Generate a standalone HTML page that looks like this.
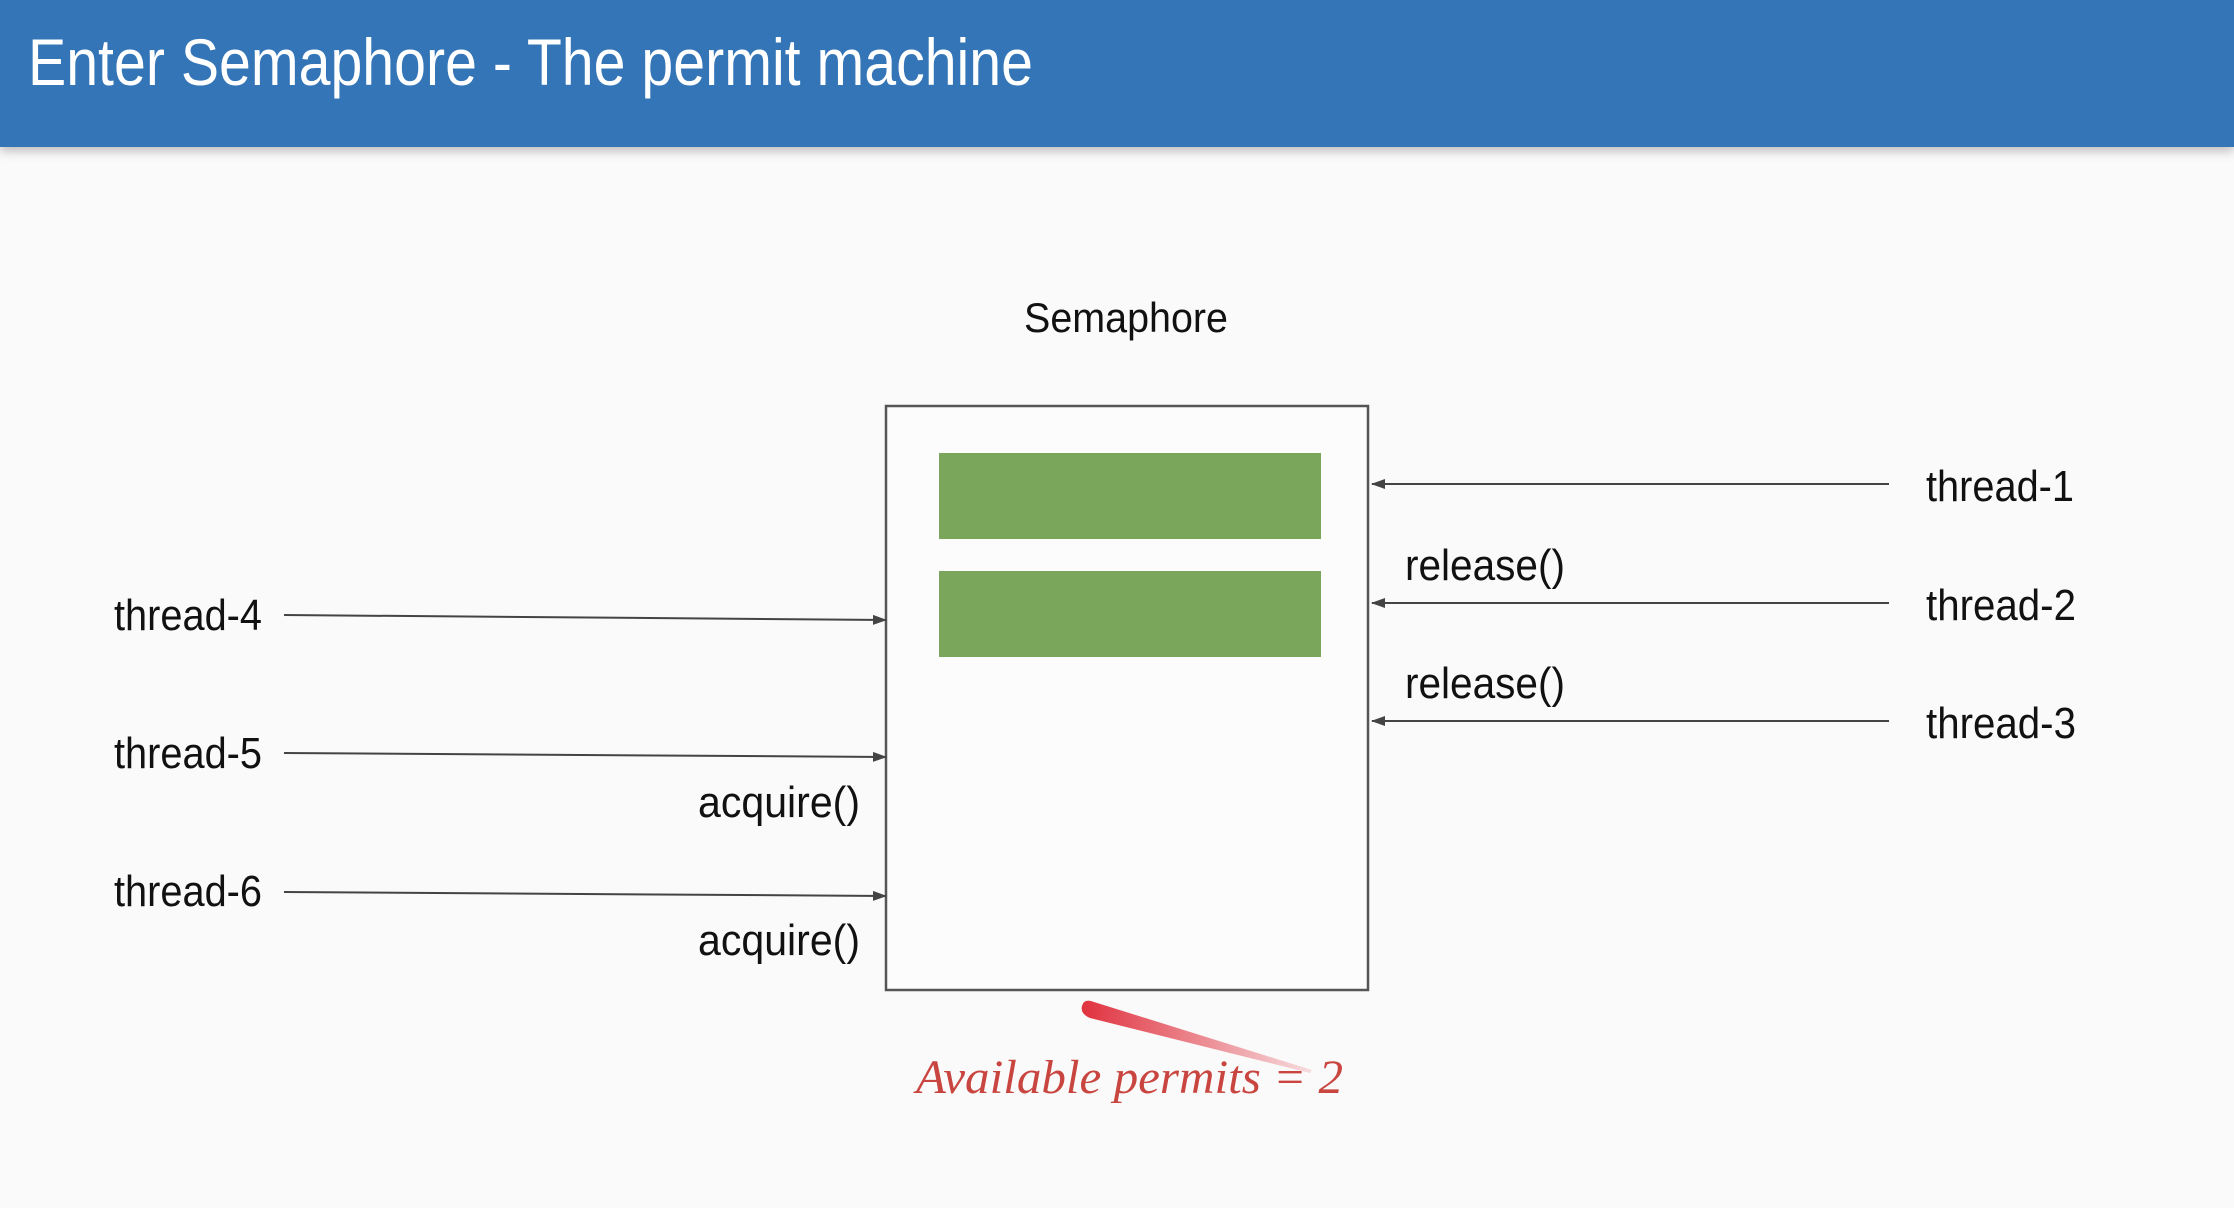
<!DOCTYPE html>
<html><head><meta charset="utf-8"><style>
html,body{margin:0;padding:0;background:#fafafa;}
body{width:2234px;height:1208px;overflow:hidden;position:relative;}
.hdr{position:absolute;left:0;top:0;width:2234px;height:147px;background:#3375b7;box-shadow:0 4px 10px rgba(0,0,0,0.25);}
svg{position:absolute;left:0;top:0;}
</style></head><body>
<div class="hdr"></div>
<svg width="2234" height="1208" xmlns="http://www.w3.org/2000/svg" font-family="Liberation Sans, sans-serif">
<defs>
<marker id="a" markerWidth="14" markerHeight="10" refX="13" refY="5" orient="auto" markerUnits="userSpaceOnUse">
<path d="M0,0 L14,5 L0,10 Z" fill="#444"/></marker>
<linearGradient id="g" x1="0" y1="0" x2="1" y2="0">
<stop offset="0" stop-color="#e0323f"/><stop offset="1" stop-color="#e0323f" stop-opacity="0.15"/></linearGradient>
</defs>
<text x="28" y="85" font-size="66" fill="#fff" textLength="1005" lengthAdjust="spacingAndGlyphs">Enter Semaphore - The permit machine</text>
<text x="1126" y="332" font-size="42" fill="#111" text-anchor="middle" textLength="204" lengthAdjust="spacingAndGlyphs">Semaphore</text>
<rect x="886" y="406" width="482" height="584" fill="#fcfcfc" stroke="#555" stroke-width="2.5"/>
<rect x="939" y="453" width="382" height="86" fill="#79a65b"/>
<rect x="939" y="571" width="382" height="86" fill="#79a65b"/>
<g stroke="#444" stroke-width="2" fill="none" marker-end="url(#a)">
<line x1="1889" y1="484" x2="1372" y2="484"/>
<line x1="1889" y1="603" x2="1372" y2="603"/>
<line x1="1889" y1="721" x2="1372" y2="721"/>
<line x1="284" y1="615" x2="886" y2="620"/>
<line x1="284" y1="753" x2="886" y2="757"/>
<line x1="284" y1="892" x2="886" y2="896"/>
</g>
<g font-size="44" fill="#111">
<text x="1926" y="501" textLength="148" lengthAdjust="spacingAndGlyphs">thread-1</text>
<text x="1926" y="620" textLength="150" lengthAdjust="spacingAndGlyphs">thread-2</text>
<text x="1926" y="738" textLength="150" lengthAdjust="spacingAndGlyphs">thread-3</text>
<text x="1405" y="580" textLength="160" lengthAdjust="spacingAndGlyphs">release()</text>
<text x="1405" y="698" textLength="160" lengthAdjust="spacingAndGlyphs">release()</text>
<text x="114" y="630" textLength="148" lengthAdjust="spacingAndGlyphs">thread-4</text>
<text x="114" y="768" textLength="148" lengthAdjust="spacingAndGlyphs">thread-5</text>
<text x="114" y="906" textLength="148" lengthAdjust="spacingAndGlyphs">thread-6</text>
<text x="698" y="817" textLength="162" lengthAdjust="spacingAndGlyphs">acquire()</text>
<text x="698" y="955" textLength="162" lengthAdjust="spacingAndGlyphs">acquire()</text>
</g>
<path d="M1082,1006 Q1084,998 1094,1002 L1312,1070 L1310,1073 L1090,1018 Q1080,1014 1082,1006 Z" fill="url(#g)"/>
<text x="916" y="1093" font-size="48" font-style="italic" font-family="Liberation Serif, serif" fill="#c9453f" textLength="427" lengthAdjust="spacingAndGlyphs">Available permits = 2</text>
</svg>
</body></html>
